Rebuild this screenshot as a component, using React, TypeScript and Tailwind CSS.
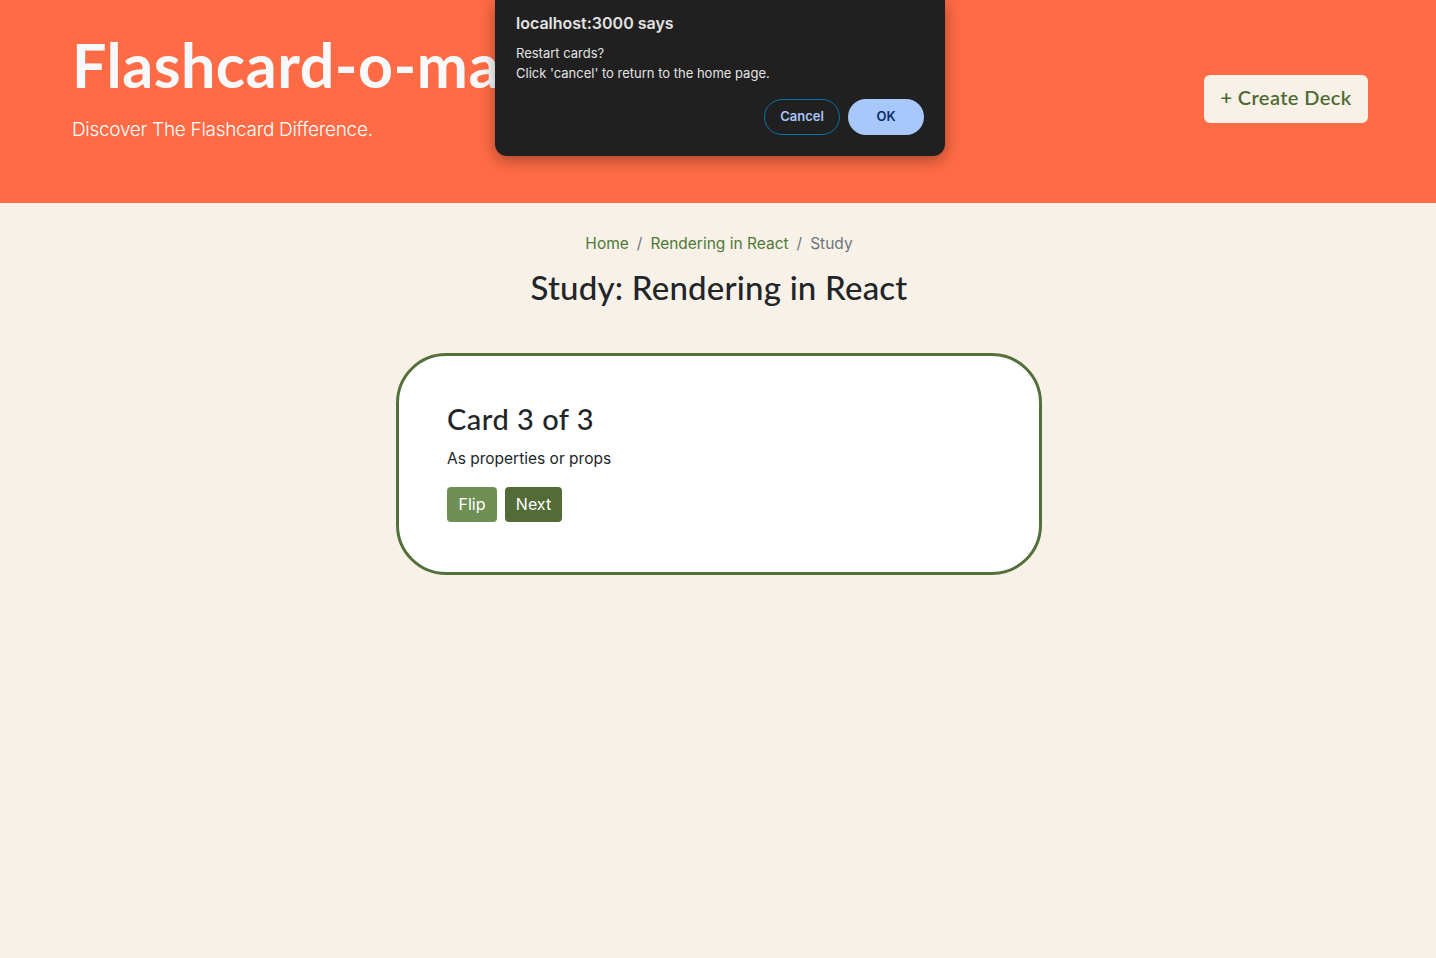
import React from 'react';

const headingFont = "font-['Lato','Open_Sans',sans-serif]";

function Header() {
  return (
    <header className="bg-[#ff6b45] h-[203px] pl-[72px] pr-[68px] flex items-start justify-between">
      <div className="pt-[28px]">
        <h1 className={`${headingFont} text-[61px] font-bold leading-[1.2] text-[#f8f9fa] tracking-[0.5px]`}>
          Flashcard-o-matic
        </h1>
        <p className="font-['Inter',sans-serif] font-light text-[19px] text-white mt-[15px] tracking-[-0.3px]">
          Discover The Flashcard Difference.
        </p>
      </div>
      <button className={`${headingFont} mt-[75px] h-[48px] w-[164px] pb-[4px] rounded-[6px] bg-[#f8f1e7] text-[#4f6b36] text-[20px] font-semibold tracking-[0.4px]`}>
        + Create Deck
      </button>
    </header>
  );
}

function Breadcrumb() {
  return (
    <nav className="flex justify-center items-center gap-[8px] font-['Inter',sans-serif] text-[15.5px] text-[#6c757d]">
      <span className="text-[#4f7a3a]">Home</span>
      <span>/</span>
      <span className="text-[#4f7a3a]">Rendering in React</span>
      <span>/</span>
      <span>Study</span>
    </nav>
  );
}

function StudyCard() {
  return (
    <div className="w-[646px] mx-auto mt-[40px] bg-white border-[3px] border-[#54703a] rounded-[50px] px-[48px] pt-[41px] pb-[50px]">
      <h3 className={`${headingFont} text-[29px] font-medium text-[#212529] tracking-[0.5px]`}>Card 3 of 3</h3>
      <p className="font-['Inter',sans-serif] text-[15.5px] text-[#212529] mt-[7px]">As properties or props</p>
      <div className="flex gap-[8px] mt-[16px]">
        <button className="font-['Inter',sans-serif] text-[16px] text-white bg-[#6f8f55] rounded-[4px] h-[35px] w-[50px]">Flip</button>
        <button className="font-['Inter',sans-serif] text-[16px] text-white bg-[#526b37] rounded-[4px] h-[35px] w-[57px]">Next</button>
      </div>
    </div>
  );
}

function AlertDialog() {
  return (
    <div className="absolute left-[495px] top-0 w-[450px] h-[156px] bg-[#202020] rounded-b-[12px] shadow-[0_4px_16px_rgba(0,0,0,0.35)] px-[21px] pt-[11px] font-['Inter',sans-serif]">
      <div className="text-[16px] font-semibold text-[#e3e3e3]">localhost:3000 says</div>
      <div className="mt-[8px] text-[13px] leading-[20px] text-[#e3e3e3]">
        <div>Restart cards?</div>
        <div>Click 'cancel' to return to the home page.</div>
      </div>
      <div className="flex justify-end gap-[8px] mt-[16px]">
        <button className="w-[76px] h-[36px] rounded-full border border-[#0b73a8] text-[13px] font-semibold text-[#a8c7fa]">Cancel</button>
        <button className="w-[76px] h-[36px] rounded-full bg-[#a8c7fa] text-[13px] font-semibold text-[#062e6f]">OK</button>
      </div>
    </div>
  );
}

export default function App() {
  return (
    <div className="relative min-h-[958px] bg-[#f8f1e7] overflow-hidden">
      <Header />
      <main className="pt-[29px] pl-[2px]">
        <Breadcrumb />
        <h2 className={`${headingFont} text-center text-[33px] font-medium text-[#212529] mt-[8px] tracking-[0.2px]`}>
          Study: Rendering in React
        </h2>
        <StudyCard />
      </main>
      <AlertDialog />
    </div>
  );
}
